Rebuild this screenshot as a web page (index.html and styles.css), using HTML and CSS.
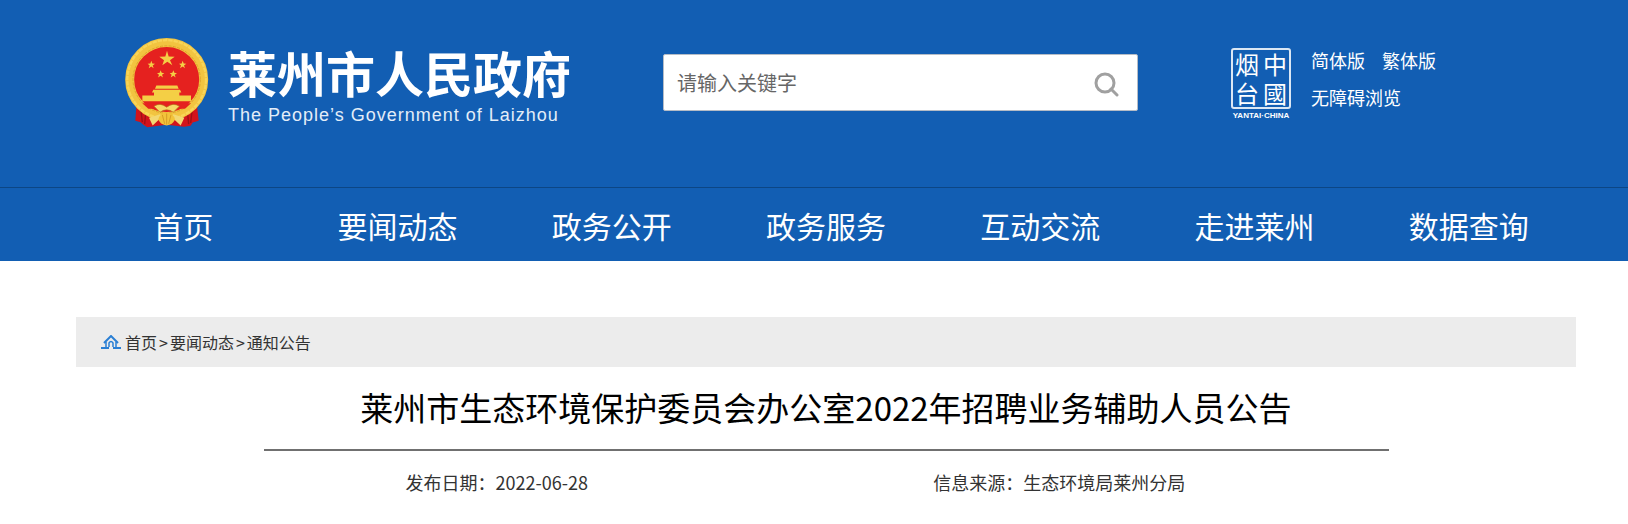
FILE: index.html
```
<!DOCTYPE html>
<html lang="zh-CN">
<head>
    <meta charset="UTF-8">
    <meta name="viewport" content="width=device-width, initial-scale=1.0">
    <title>莱州市生态环境保护委员会办公室2022年招聘业务辅助人员公告</title>
    <link rel="stylesheet" href="styles.css">
</head>
<body>

    <header class="header">
        <div class="wrap header-top">
            <a class="logo" href="#">
                <!-- National emblem -->
                <svg class="emblem" viewBox="42 22 258 273" aria-hidden="true">
                    <path d="M80 215 L100 212 L240 212 L260 218 L266 272 L248 277 L242 287 L222 290 L170 284 L112 291 L100 284 L92 276 L76 272 Z" fill="#d3131b"/>
                    <path d="M91 225 L97 276 M248 225 L242 278 M108 240 L104 282 M232 240 L236 282" stroke="#9d1015" stroke-width="4" fill="none"/>
                    <circle cx="170" cy="148" r="111" fill="#e5211f" stroke="#f2c440" stroke-width="27"/>
                    <circle cx="170" cy="148" r="118" fill="none" stroke="#f8d558" stroke-width="7" stroke-dasharray="13 3"/>
                    <circle cx="170" cy="148" r="101" fill="none" stroke="#dfa52c" stroke-width="3" stroke-dasharray="9 4"/>
                    <g fill="#f4cf45">
                        <path d="M171 62 L176 79 L194 80 L180 90 L187 105 L172 95 L157 105 L162 90 L148 80 L166 79 Z"/>
                        <path d="M124 92 L127 100 L135 101 L128 106 L131 114 L124 109 L116 114 L119 106 L113 101 L121 100 Z"/>
                        <path d="M218 92 L221 100 L229 101 L222 106 L225 114 L218 109 L210 114 L213 106 L207 101 L215 100 Z"/>
                        <path d="M152 120 L155 128 L163 129 L156 134 L159 142 L152 137 L144 142 L147 134 L141 129 L149 128 Z"/>
                        <path d="M190 120 L193 128 L201 129 L194 134 L197 142 L190 137 L182 142 L185 134 L179 129 L187 128 Z"/>
                        <path d="M139 166 H202 L206 176 H135 Z M130 179 H210 L214 187 H126 Z M132 187 H208 V196 H243 V213 H97 V196 H132 Z"/>
                    </g>
                    <path d="M97 219 H243 L225 236 H115 Z" fill="#e5211f"/>
                    <path d="M132 228 Q151 216 170 231 Q189 216 208 228 L190 246 Q170 232 150 246 Z" fill="#f6d968" stroke="#b27a19" stroke-width="2"/>
                    <path d="M117 263 L150 252 L156 260 L128 286 Z M223 263 L190 252 L184 260 L212 286 Z" fill="#f3d873"/>
                    <path d="M145 268 Q150 248 170 247 Q190 248 195 268 Q188 284 170 286 Q152 284 145 268 Z" fill="#f2c33a"/>
                    <path d="M170 250 V283 M157 254 L164 281 M183 254 L176 281" stroke="#c98a1c" stroke-width="2"/>
                </svg>
                <span class="logo-text">
                    <span class="logo-cn">莱州市人民政府</span>
                    <span class="logo-en">The People’s Government of Laizhou</span>
                </span>
            </a>

            <form class="search">
                <input class="search-input" type="text" placeholder="请输入关键字" aria-label="请输入关键字">
                <button class="search-btn" type="button" aria-label="搜索">
                    <svg width="26" height="26" viewBox="0 0 26 26" fill="none" stroke="#a0a0a0">
                        <circle cx="12" cy="12" r="9" stroke-width="3"/>
                        <path d="M18 18 L24 24" stroke-width="3" stroke-linecap="round"/>
                    </svg>
                </button>
            </form>

            <div class="tools">
                <a class="seal" href="#">
                    <span class="seal-box">
                        <span>烟</span><span>中</span>
                        <span>台</span><span>國</span>
                    </span>
                    <span class="seal-en">YANTAI·CHINA</span>
                </a>
                <div class="tool-links">
                    <div class="tool-row">
                        <a href="#">简体版</a>
                        <a href="#">繁体版</a>
                    </div>
                    <div class="tool-row">
                        <a href="#">无障碍浏览</a>
                    </div>
                </div>
            </div>
        </div>

        <nav class="nav">
            <ul class="wrap nav-list">
                <li><a href="#">首页</a></li>
                <li><a href="#">要闻动态</a></li>
                <li><a href="#">政务公开</a></li>
                <li><a href="#">政务服务</a></li>
                <li><a href="#">互动交流</a></li>
                <li><a href="#">走进莱州</a></li>
                <li><a href="#">数据查询</a></li>
            </ul>
        </nav>
    </header>

    <main class="wrap">
        <div class="breadcrumb">
            <svg class="home" width="20" height="14" viewBox="0 0 20 14" fill="none" stroke="#2a7fd4" aria-hidden="true">
                <path d="M3 8 L10 1 L17 8" stroke-width="2"/>
                <path d="M5 7 V12 M15 7 V12 M8 12 V8 Q10 5 12 8 V12" stroke-width="1.5"/>
                <path d="M0 13 H8 M12 13 H20" stroke-width="2"/>
            </svg>
            <a href="#">首页</a><span class="sep">&gt;</span><a href="#">要闻动态</a><span class="sep">&gt;</span><a href="#">通知公告</a>
        </div>

        <article class="article">
            <h1>莱州市生态环境保护委员会办公室2022年招聘业务辅助人员公告</h1>
            <div class="meta">
                <span>发布日期：2022-06-28</span>
                <span>信息来源：生态环境局莱州分局</span>
            </div>
        </article>
    </main>

</body>
</html>
```
FILE: styles.css
```
* {
    box-sizing: border-box;
}

body {
    margin: 0;
    background-color: #fff;
    color: #333;
    font-family: "Noto Sans CJK SC", sans-serif;
    font-size: 16px;
}

a {
    color: inherit;
    text-decoration: none;
}

.wrap {
    margin: 0 52px 0 76px;
}

/* Header */
.header {
    background-color: #125eb3;
    color: #fff;
}

.header-top {
    display: flex;
    align-items: flex-start;
    height: 187px;
    padding: 37px 0 0 48px;
}

.logo {
    display: flex;
    gap: 18px;
    width: 539px;
    flex-shrink: 0;
}

.emblem {
    width: 86px;
    height: 92px;
}

.logo-text {
    display: flex;
    flex-direction: column;
    padding-top: 4px;
    white-space: nowrap;
}

.logo-cn {
    font-size: 49px;
    font-weight: bold;
    line-height: 62px;
}

.logo-en {
    font-family: "Liberation Sans", sans-serif;
    font-size: 18px;
    line-height: 24px;
    letter-spacing: 1px;
    color: #e3edf8;
}

.search {
    display: flex;
    flex: 0 1 475px;
    height: 57px;
    margin-top: 17px;
    background-color: #fff;
    border: 1px solid #b5bcc6;
    border-radius: 2px;
}

.search-input {
    flex: 1;
    min-width: 0;
    padding: 0 0 0 13px;
    border: 0;
    background: none;
    outline: none;
    font-family: inherit;
    font-size: 20px;
    color: #333;
}

.search-input::placeholder {
    color: #666;
}

.search-btn {
    display: flex;
    align-items: center;
    padding: 2px 18px 0;
    border: 0;
    background: none;
    cursor: pointer;
}

.tools {
    display: flex;
    gap: 20px;
    margin-left: 93px;
    padding-top: 11px;
}

.seal {
    display: flex;
    flex-direction: column;
    align-items: center;
    gap: 2px;
}

.seal-box {
    display: grid;
    grid-template-columns: 1fr 1fr;
    width: 60px;
    height: 61px;
    border: 2px solid #dbe7f4;
    border-radius: 3px;
    font-size: 24px;
    line-height: 28px;
    text-align: center;
}

.seal-en {
    font-family: "Liberation Sans", sans-serif;
    font-size: 8px;
    font-weight: bold;
    line-height: 10px;
    white-space: nowrap;
}

.tool-links {
    margin-top: -6px;
    font-size: 18px;
    line-height: 37px;
    white-space: nowrap;
}

.tool-row {
    display: flex;
    gap: 17px;
}

/* Navigation */
.nav {
    border-top: 1px solid #0c4685;
}

.nav-list {
    display: flex;
    padding: 2px 0 0;
    list-style: none;
}

.nav-list li {
    flex: 1;
    text-align: center;
    font-size: 30px;
    line-height: 71px;
    white-space: nowrap;
}

/* Content */
.breadcrumb {
    display: flex;
    align-items: center;
    height: 50px;
    margin-top: 56px;
    padding-left: 25px;
    background-color: #ececec;
}

.home {
    margin-right: 4px;
}

.sep {
    padding: 0 2px;
}

.article {
    width: 75%;
    margin: 0 auto;
}

.article h1 {
    margin: 0;
    padding: 16px 0 18px;
    border-bottom: 2px solid #707070;
    color: #000;
    font-size: 33px;
    font-weight: normal;
    line-height: 48px;
    text-align: center;
    white-space: nowrap;
}

.meta {
    display: flex;
    padding-top: 16px;
    font-size: 18px;
    line-height: 30px;
}

.meta span {
    flex: 1;
    padding-right: 96px;
    text-align: center;
}
```
